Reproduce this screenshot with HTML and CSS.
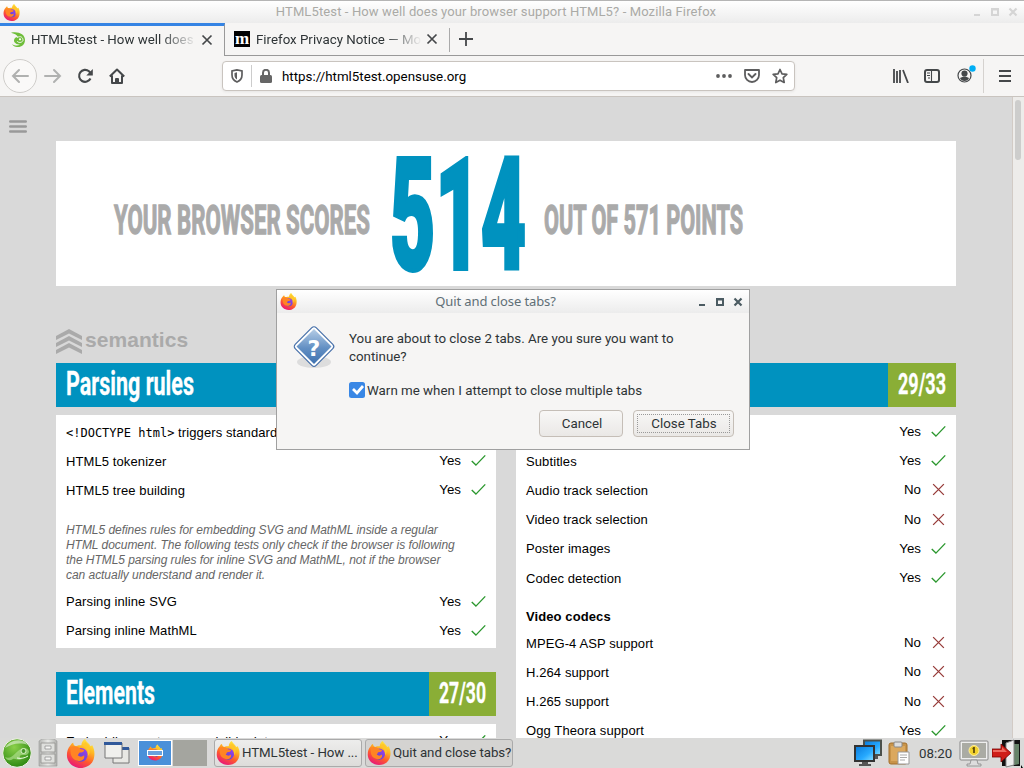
FILE: index.html
```html
<!DOCTYPE html>
<html lang="en">
<head>
<meta charset="utf-8">
<title>HTML5test - How well does your browser support HTML5?</title>
<link rel="stylesheet" href="styles.css">
</head>
<body>
<svg class="defs" width="0" height="0">
  <defs>
    <linearGradient id="flame" x1=".8" y1="0" x2=".3" y2="1"><stop offset="0" stop-color="#fff044"/><stop offset=".35" stop-color="#ffb321"/><stop offset=".65" stop-color="#ff5a2c"/><stop offset="1" stop-color="#e7147c"/></linearGradient>
    <linearGradient id="globe" x1="1" y1="0" x2="0" y2="1"><stop offset="0" stop-color="#a13ff0"/><stop offset="1" stop-color="#4b48c8"/></linearGradient>
    <linearGradient id="sign" x1="0" y1="0" x2="0" y2="1"><stop offset="0" stop-color="#b6cde6"/><stop offset=".55" stop-color="#628fc3"/><stop offset="1" stop-color="#3f72b0"/></linearGradient>
    <radialGradient id="lime" cx=".4" cy=".3" r=".7"><stop offset="0" stop-color="#8ad04a"/><stop offset="1" stop-color="#2f8a13"/></radialGradient>
    <linearGradient id="screen" x1="0" y1="0" x2="1" y2="1"><stop offset="0" stop-color="#0878da"/><stop offset=".6" stop-color="#27aaff"/><stop offset="1" stop-color="#8be0ff"/></linearGradient>
    <linearGradient id="steel" x1="0" y1="0" x2="1" y2="0"><stop offset="0" stop-color="#b4b5b2"/><stop offset=".5" stop-color="#e9eae7"/><stop offset="1" stop-color="#aeafac"/></linearGradient>
    <symbol id="firefox" viewBox="0 0 32 32">
      <path d="M5 7c1-2 2-3 3-3 0 2 1 3 3 4 2-1 4-1 6-1C17 4 19 1 21 0c1 3 5 5 6 8l2-1c2 4 3 8 2 13-1 7-7 12-15 12S1 26 1 18c0-4 1-8 4-11z" fill="url(#flame)"/>
      <circle cx="16.500" cy="17.500" r="7.500" fill="url(#globe)"/>
      <path d="M5 9c4-2 8-1 11 2l4 1c0 2-2 3-5 3-1 1-1 2-2 3 2 2 5 2 7 0 1 5-3 7-7 6-5-1-8-5-8-10z" fill="#ff8424"/>
      <path d="M17 7c5 1 8 6 7 12 3-3 3-7 1-12l-4-4c0 2-2 3-4 4z" fill="#ffc62b"/>
    </symbol>
    <symbol id="yes" viewBox="0 0 14 14"><path d="M.7 7.500 4.600 11.300 13.300 2.200" fill="none" stroke="#2c982f" stroke-width="1.300"/></symbol>
    <symbol id="no" viewBox="0 0 14 14"><path d="M2 2 12 12M12 2 2 12" fill="none" stroke="#963a38" stroke-width="1.200"/></symbol>
  </defs>
</svg>

<header class="titlebar">
  <svg class="ff16"><use href="#firefox"/></svg>
  <span class="wintitle">HTML5test - How well does your browser support HTML5? - Mozilla Firefox</span>
  <svg class="wbtns" width="46" height="12" viewBox="0 0 46 12"><path d="M2 8h6v2H2z" /><path d="M19 2h8v8h-8zM21 4.500v3.500h4V4.500z" fill-rule="evenodd"/><path d="m37.500 2.500 7 7m0-7-7 7" stroke="currentColor" stroke-width="2.200"/></svg>
</header>

<div class="tabs">
  <div class="tab active">
    <svg class="fav" width="16" height="16" viewBox="0 0 16 16"><path d="M1 .8C8-.8 15 2 15 8c0 5-4 7.500-8 7-2 0-4-1-5-3 3 2 6 2 8 .5C7 12.500 4 11 4 8.500 4 6 6 5 8 5 7 3 4 1.500 1 .8z" fill="#6fbe3a"/><path d="M7 5.500c4-2 6 0 6 3-1 2.500-5 2.500-6 .5" fill="none" stroke="#f5f4f2" stroke-width="1"/><circle cx="10" cy="7.300" r="1.100" fill="#fff"/><path d="M0 3.500h5M1 6.500h3M1 9.500h3" stroke="#f6f5f4" stroke-width=".7"/></svg>
    <span class="label l1">HTML5test - How well does</span>
    <svg class="x" width="12" height="12" viewBox="0 0 12 12"><path d="m1.500 1.500 9 9m0-9-9 9"/></svg>
  </div>
  <div class="tab second">
    <span class="moz">m</span>
    <span class="label l2">Firefox Privacy Notice — Mo</span>
    <svg class="x" width="12" height="12" viewBox="0 0 12 12"><path d="m1.500 1.500 9 9m0-9-9 9"/></svg>
  </div>
  <div class="newtab"><svg width="14" height="14" viewBox="0 0 14 14"><path d="M7 0v14M0 7h14" stroke="#45484a" stroke-width="1.800"/></svg></div>
</div>

<nav class="toolbar">
  <span class="back"><svg width="18" height="16" viewBox="0 0 18 16"><path d="M17 8H2m6-6L2 8l6 6"/></svg></span>
  <svg class="fwd" width="18" height="16" viewBox="0 0 18 16"><path d="M1 8h15m-6-6 6 6-6 6"/></svg>
  <svg class="reload" width="16" height="16" viewBox="0 0 16 16"><path d="M13.500 10.500A6 6 0 1 1 12 3.300L14 5.500" fill="none" stroke="#45484a" stroke-width="2.100"/><path d="M15.800 1v6.500H9.300z" fill="#45484a"/></svg>
  <svg class="home" width="16" height="16" viewBox="0 0 16 16"><path d="m.8 8.500 7.200-7 7.200 7M3 7.500V15h10V7.500M7 14.500V11h2v3.500" fill="none" stroke="#45484a" stroke-width="2" stroke-linejoin="round"/></svg>
  <div class="urlbar">
    <svg class="shield" width="12" height="14" viewBox="0 0 12 14"><path d="M6 .9 1 2v4c0 3 1.500 5.500 5 7 3.500-1.500 5-4 5-7V2z" fill="none" stroke="#5d5d5e" stroke-width="1.700"/><path d="M6 3.300 3.500 4v2.500c0 1.500.8 3 2.500 4z" fill="#5d5d5e"/></svg>
    <i class="usep"></i>
    <svg class="lock" width="12" height="14" viewBox="0 0 12 14"><path d="M3 7V3.800a3 3 0 0 1 6 0V7" fill="none" stroke="#666" stroke-width="2"/><rect y="6" width="12" height="8" rx="1.500" fill="#666"/></svg>
    <span class="url">https://html5test.opensuse.org</span>
    <svg class="dots" width="16" height="4" viewBox="0 0 16 4"><circle cx="2" cy="2" r="1.900"/><circle cx="8" cy="2" r="1.900"/><circle cx="14" cy="2" r="1.900"/></svg>
    <svg class="pocket" width="16" height="14" viewBox="0 0 16 14"><path d="M1 1h14v5a7 7 0 0 1-14 0z" fill="none" stroke="#5d5d5e" stroke-width="1.800" stroke-linejoin="round"/><path d="m4.500 5 3.500 3.500L11.500 5" fill="none" stroke="#5d5d5e" stroke-width="1.900" stroke-linecap="round"/></svg>
    <svg class="star" width="16" height="16" viewBox="0 0 16 16"><path d="m8 1.500 2 4.300 4.800.6-3.500 3.300.9 4.800L8 12.200l-4.200 2.300.9-4.800L1.200 6.400 6 5.800z" fill="none" stroke="#5d5d5e" stroke-width="1.700" stroke-linejoin="round"/></svg>
  </div>
  <svg class="lib" width="16" height="14" viewBox="0 0 16 14"><path d="M1 0v14M4 2v12M7 1v13M10 1l5 13" stroke="#45484a" stroke-width="1.800" fill="none"/></svg>
  <svg class="side" width="16" height="14" viewBox="0 0 16 14"><rect x="1" y="1" width="14" height="12" rx="2" fill="none" stroke="#45484a" stroke-width="2"/><path d="M7.500 1v12M3 4h3M3 6.500h3M4 9h2" stroke="#45484a" stroke-width="1.100"/></svg>
  <svg class="acct" width="20" height="20" viewBox="0 0 20 20"><circle cx="8.500" cy="11.500" r="6.500" fill="none" stroke="#45484a" stroke-width="1.200"/><circle cx="8.500" cy="9.500" r="3.100" fill="#45484a"/><path d="M4 14c3-2 6-2 9 0-1 4-8 4-9 0z" fill="#45484a"/><circle cx="16.500" cy="4.500" r="3.200" fill="#00aef5"/></svg>
  <i class="tsep"></i>
  <svg class="menu" width="12" height="12" viewBox="0 0 12 12"><path d="M0 1h12M0 6h12M0 11h12" stroke="#45484a" stroke-width="2"/></svg>
</nav>

<div class="viewport">
  <main class="page">
    <svg class="burger" width="18" height="13" viewBox="0 0 18 13"><path d="M1.200 1.500h15.600M1.200 6.500h15.600M1.200 11.500h15.600" stroke="#999" stroke-width="2.400" stroke-linecap="round"/></svg>
    <section class="score">
      <svg width="900" height="145" viewBox="0 0 900 145">
        <g class="gothic gray"><text x="58" y="93" font-size="41" textLength="256" lengthAdjust="spacingAndGlyphs">YOUR BROWSER SCORES</text>
        <text x="488" y="93" font-size="41" textLength="199" lengthAdjust="spacingAndGlyphs">OUT OF 571 POINTS</text></g>
        <text class="gothic big" x="334" y="128" font-size="155" textLength="136" lengthAdjust="spacingAndGlyphs">514</text>
      </svg>
    </section>
    <h2 class="semantics"><svg width="26" height="26" viewBox="0 0 26 26"><path d="m0 7 13-7 13 7v4L13 4.500 0 11zM0 14l13-7 13 7v4l-13-6.500L0 18zM0 21l13-7 13 7v4l-13-6.500L0 25z" fill="#aaa"/></svg><span>semantics</span></h2>
    <div class="columns">
      <div class="col">
        <div class="head"><svg class="gothic" width="200" height="44"><text x="10" y="32" font-size="33" textLength="128" lengthAdjust="spacingAndGlyphs">Parsing rules</text></svg><svg class="pts gothic" width="67" height="44"></svg></div>
        <div class="panel first">
          <div class="row"><span><code>&lt;!DOCTYPE html&gt;</code> triggers standards mode</span><b></b></div>
          <div class="row"><span>HTML5 tokenizer</span><b>Yes</b><svg><use href="#yes"/></svg></div>
          <div class="row"><span>HTML5 tree building</span><b>Yes</b><svg><use href="#yes"/></svg></div>
          <p>HTML5 defines rules for embedding SVG and MathML inside a regular<br>HTML document. The following tests only check if the browser is following<br>the HTML5 parsing rules for inline SVG and MathML, not if the browser<br>can actually understand and render it.</p>
          <div class="row"><span>Parsing inline SVG</span><b>Yes</b><svg><use href="#yes"/></svg></div>
          <div class="row"><span>Parsing inline MathML</span><b>Yes</b><svg><use href="#yes"/></svg></div>
        </div>
        <div class="head"><svg class="gothic" width="200" height="44"><text x="10" y="32" font-size="33" textLength="89" lengthAdjust="spacingAndGlyphs">Elements</text></svg><svg class="pts gothic" width="67" height="44"><text x="10" y="31" font-size="29" textLength="47" lengthAdjust="spacingAndGlyphs">27/30</text></svg></div>
        <div class="panel"><div class="row"><span>Embedding custom non-visible data</span><b>Yes</b><svg><use href="#yes"/></svg></div></div>
      </div>
      <div class="col">
        <div class="head"><svg class="gothic" width="200" height="44"></svg><svg class="pts gothic" width="68" height="44"><text x="10" y="31" font-size="29" textLength="48" lengthAdjust="spacingAndGlyphs">29/33</text></svg></div>
        <div class="panel">
          <div class="row"><span></span><b>Yes</b><svg><use href="#yes"/></svg></div>
          <div class="row"><span>Subtitles</span><b>Yes</b><svg><use href="#yes"/></svg></div>
          <div class="row"><span>Audio track selection</span><b>No</b><svg><use href="#no"/></svg></div>
          <div class="row"><span>Video track selection</span><b>No</b><svg><use href="#no"/></svg></div>
          <div class="row"><span>Poster images</span><b>Yes</b><svg><use href="#yes"/></svg></div>
          <div class="row"><span>Codec detection</span><b>Yes</b><svg><use href="#yes"/></svg></div>
          <h3>Video codecs</h3>
          <div class="row"><span>MPEG-4 ASP support</span><b>No</b><svg><use href="#no"/></svg></div>
          <div class="row"><span>H.264 support</span><b>No</b><svg><use href="#no"/></svg></div>
          <div class="row"><span>H.265 support</span><b>No</b><svg><use href="#no"/></svg></div>
          <div class="row"><span>Ogg Theora support</span><b>Yes</b><svg><use href="#yes"/></svg></div>
        </div>
      </div>
    </div>
  </main>
  <div class="scroll"><i></i></div>
</div>

<section class="dialog">
  <header><svg class="ff16"><use href="#firefox"/></svg><span class="dtitle">Quit and close tabs?</span>
  <svg class="wbtns" width="46" height="12" viewBox="0 0 46 12"><path d="M2 8h6v2H2z" /><path d="M19 2h8v8h-8zM21 4.500v3.500h4V4.500z" fill-rule="evenodd"/><path d="m37.500 2.500 7 7m0-7-7 7" stroke="currentColor" stroke-width="2.200"/></svg></header>
  <div class="dbody">
    <svg class="sign" width="44" height="46" viewBox="0 0 44 46"><ellipse cx="22" cy="37" rx="17" ry="6" fill="#ddd"/><rect x="7.200" y="6.700" width="29.600" height="29.600" rx="3" transform="rotate(45 22 21.500)" fill="#fff" stroke="#456fa9" stroke-width="1.200"/><path d="m22 4 17.500 17.500L22 39 4.500 21.500z" fill="url(#sign)"/><text x="22" y="30.500" text-anchor="middle">?</text></svg>
    <div class="dtext">
      <div class="msg">You are about to close 2 tabs. Are you sure you want to<br>continue?</div>
      <div class="warn"><svg width="16" height="16" viewBox="0 0 16 16"><rect width="16" height="16" rx="2.500" fill="#3987e5"/><path d="m4 7 4 4L14 4" fill="none" stroke="#fff" stroke-width="2.700"/></svg><span>Warn me when I attempt to close multiple tabs</span></div>
    </div>
  </div>
  <footer><button class="cancel">Cancel</button><button class="closet"><span>Close Tabs</span></button></footer>
</section>

<footer class="taskbar">
  <svg class="suse" width="30" height="30" viewBox="0 0 30 30"><circle cx="15" cy="15" r="14.300" fill="url(#lime)" stroke="#f0f0e8" stroke-width="1"/><path d="M3 19c7 4 12-8 18-9 4 0 6 2 6 4-1 4-5 3-7 3-3 0-3 3 0 4-4 2-7-1-9 0-3 2-6 2-8-2z" fill="#b9e49a" opacity=".6"/><circle cx="21.500" cy="13" r="2.500" fill="#48982a" stroke="#d6efc4"/><path d="M3 10C7 2 20-1 26 7 17 4 10 6 3 10z" fill="#fff" opacity=".5"/><path d="M15 20c4 1 8 0 11-2" fill="none" stroke="#f1ffe6"/></svg>
  <svg class="cab" width="20" height="28" viewBox="0 0 20 28"><path d="M1 2 4 0h12l3 2v25H1z" fill="url(#steel)" stroke="#999" stroke-width=".6"/><path d="M3 4h14v9H3zM3 15h14v9H3z" fill="#dfe0dd" stroke="#8f908d" stroke-width=".8"/><path d="M7 7h6v3H7zM7 18h6v3H7z" fill="#f5f5f3" stroke="#888" stroke-width=".7"/></svg>
  <svg class="ff28"><use href="#firefox"/></svg>
  <svg class="wins" width="26" height="24" viewBox="0 0 26 24"><path d="M9 7h16v15H9z" fill="#e8e8e4" stroke="#777"/><path d="M9 6h16v3H9z" fill="#31599a"/><path d="M1 2h17v15H1z" fill="#f0f0ed" stroke="#777"/><path d="M0 1h18v3H0z" fill="#31599a"/></svg>
  <div class="desk on"><svg><use href="#firefox"/></svg><i></i></div><div class="desk"></div>
  <div class="task t1"><svg><use href="#firefox"/></svg><span>HTML5test - How ...</span></div>
  <div class="task t2"><svg><use href="#firefox"/></svg><span>Quit and close tabs?</span></div>
  <svg class="net" width="30" height="28" viewBox="0 0 30 28"><path d="M11 1.500h17V16H11z" fill="url(#screen)" stroke="#4b504c" stroke-width="2"/><path d="M18 17h7v3h-7z" fill="#555"/><path d="M2 7h19v15H2z" fill="url(#screen)" stroke="#333" stroke-width="2"/><path d="M9 23h6v2h3v2H6v-2h3z" fill="#555"/></svg>
  <svg class="clip" width="22" height="24" viewBox="0 0 22 24"><rect x="1" y="2" width="18" height="21" rx="2" fill="#c8944a" stroke="#a36e2a"/><path d="M3 5h14v15H3z" fill="#dba85e"/><rect x="6" y="1" width="8" height="5" rx="1" fill="#ddd" stroke="#888"/><path d="M10 11h11v12H10z" fill="#fff" stroke="#999"/><path d="M12 14h7M12 16.500h7M12 19h5" stroke="#aaa"/></svg>
  <span class="clock">08:20</span>
  <svg class="mon" width="30" height="27" viewBox="0 0 30 27"><rect x="1" y="1" width="28" height="19" rx="1" fill="#eee" stroke="#888"/><path d="M3 3h24v15H3z" fill="#aaaba4"/><path d="M12 20h6l1 4h3v2H8v-2h3z" fill="#ddd" stroke="#888" stroke-width=".8"/><circle cx="15" cy="10.500" r="5" fill="#f2d22e" stroke="#fff0a0"/><path d="M15 7v6M13.500 8.500H15" stroke="#57460a" stroke-width="1.700" fill="none"/></svg>
  <svg class="exit" width="31" height="29" viewBox="0 0 31 29"><path d="M10 1h18v26H10z" fill="#111"/><path d="M18 5h9v20l-9 2z" fill="#668369"/><path d="m14 4 8-3v25l-8 2z" fill="#eee" stroke="#888"/><path d="M0 10h9V5l10 9-10 9v-5H0z" fill="#cf1e18" stroke="#700" stroke-width=".8"/><path d="M1 11h9V8l5 5H1z" fill="#ed6a5f"/><path d="m29 26 2 3h-2z" fill="#000"/></svg>
</footer>
</body>
</html>
```

FILE: styles.css
```css
* { box-sizing: border-box; }
body { margin: 0; width: 1024px; height: 768px; overflow: hidden; display: flex; flex-direction: column; position: relative; font-family: Roboto, sans-serif; background: #f6f5f4; color: #2e3436; }
svg { display: block; flex: none; }
.defs { position: absolute; }
.ff16 { width: 17px; height: 17px; }
.titlebar { height: 23px; flex: none; border-top: 1px solid #b5b5b5; background: linear-gradient(#fff, #ececec); display: flex; align-items: center; padding: 0 6px 0 3px; color: #d5d5d5; }
.wintitle { flex: 1; text-align: center; color: #aaaaa6; font-size: 13px; padding-bottom: 1px; letter-spacing: .12px; white-space: nowrap; }
.wbtns { fill: currentColor; }
.tabs { height: 33px; flex: none; display: flex; align-items: stretch; font-size: 13.300px; }
.tab { display: flex; align-items: center; white-space: nowrap; }
.tab.active { width: 225px; border-top: 3px solid #3584e4; border-right: 1px solid #999; padding-left: 10px; padding-bottom: 3px; }
.tab.second { width: 225px; border-bottom: 1px solid #999; padding-left: 9px; }
.label { overflow: hidden; margin-left: 5px; width: 166px; -webkit-mask-image: linear-gradient(90deg, #000 78%, transparent); mask-image: linear-gradient(90deg, #000 78%, transparent); }
.l2 { margin-left: 6px; }
.x { margin-left: 4px; fill: none; stroke: #45484a; stroke-width: 1.700; }
.moz { background: #000; color: #fff; width: 16px; height: 16px; font: bold 17px/15px "Liberation Serif", serif; text-align: center; }
.newtab { flex: 1; border-bottom: 1px solid #999; padding: 9px 0 0 9px; position: relative; }
.newtab::before { content: ""; position: absolute; left: -1px; top: 5px; height: 24px; width: 1px; background: #aaa; }
.toolbar { height: 41px; flex: none; border-bottom: 1px solid #c9c4bf; display: flex; align-items: center; padding-left: 3px; }
.back { width: 34px; height: 34px; border: 1px solid #cfcdca; border-radius: 50%; background: #faf9f8; display: flex; align-items: center; justify-content: center; }
.back path, .fwd path { fill: none; stroke: #b0b1b0; stroke-width: 2; stroke-linecap: round; }
.fwd { margin-left: 7px; }
.reload { margin-left: 15px; }
.home { margin-left: 16px; }
.urlbar { width: 573px; height: 30px; margin-left: 97px; background: #fff; border: 1px solid #c9c4bf; border-radius: 4px; display: flex; align-items: center; padding-left: 8px; box-shadow: 0 1px 3px #0001; }
.usep { height: 22px; width: 1px; background: #ccc; margin: 0 8px; }
.url { font-size: 13.330px; color: #000; margin-left: 10px; width: 430px; }
.dots { fill: #5d5d5e; margin-left: 4px; }
.pocket { margin-left: 12px; }
.star { margin-left: 12px; }
.lib { margin-left: 98px; }
.side { margin-left: 15px; }
.acct { margin-left: 16px; margin-bottom: 5px; }
.tsep { width: 1px; height: 34px; background: #d5d2cf; margin-left: 7px; }
.menu { margin-left: 15px; }
.viewport { height: 641px; flex: none; display: flex; overflow: hidden; background: #d9d9d9; }
.page { width: 1012px; flex: none; position: relative; padding: 44px 56px 0; font-family: "Liberation Sans", Arial, sans-serif; color: #000; }
.scroll { width: 12px; border-left: 1px solid #d2cbc5; background: #edecea; padding: 3px 0 0 2px; }
.scroll i { display: block; width: 6px; height: 60px; border-radius: 3px; background: #cdcdcc; }
.burger { position: absolute; left: 9px; top: 23px; }
.score { width: 900px; height: 145px; background: #fff; }
.gothic { font-family: Roboto, sans-serif; font-weight: 700; fill: #fff; stroke: #fff; stroke-width: .3px; }
.gray { fill: #aaa; stroke: #aaa; stroke-width: 1.300px; }
.big { font-weight: 900; fill: #0092bf; stroke: #0092bf; stroke-width: 4px; }
.semantics { margin: 0; height: 77px; padding-top: 43px; display: flex; gap: 3px; color: #aaa; font-size: 21px; line-height: 22px; letter-spacing: .05px; }
.columns { display: flex; gap: 20px; align-items: flex-start; }
.col { width: 440px; flex: none; }
.head { height: 44px; background: #0092bf; display: flex; justify-content: space-between; margin-bottom: 8px; }
.pts { background: #8aae36; }
.panel { background: #fff; padding: 2px 10px 0; font-size: 13px; }
.first { height: 233px; margin-bottom: 24px; }
.row { height: 29.200px; display: flex; align-items: center; }
.row span { flex: 1; white-space: nowrap; padding-top: 1px; letter-spacing: .1px; }
.row b { font-weight: 400; margin-right: 10px; font-size: 13.300px; }
.row svg { width: 15px; height: 15px; }
.row code { font: 12px "DejaVu Sans Mono", monospace; letter-spacing: 0; }
.panel p { margin: 18px 0 4px; height: 60px; color: #666; font-size: 12px; line-height: 15px; font-style: italic; white-space: nowrap; letter-spacing: -.045px; }
.panel h3 { font-size: 13px; line-height: 18px; margin: 16px 0 2px; letter-spacing: .1px; }
.dialog { position: absolute; left: 276px; top: 289px; width: 474px; height: 161px; border: 1px solid #a0a0a0; background: #f6f5f4; font-size: 13.330px; }
.dialog header { height: 23px; background: linear-gradient(#fff, #ececec); display: flex; align-items: center; padding: 0 6px 0 3px; color: #4b5b62; }
.dtitle { flex: 1; text-align: center; font: 13px "Noto Sans", sans-serif; color: #5f6f76; padding: 0 3px 2px 0; letter-spacing: -.1px; }
.dbody { display: flex; padding: 12px 0 0 15px; height: 95px; }
.dtext { margin-left: 13px; padding-top: 5px; }
.msg { line-height: 18px; white-space: nowrap; }
.warn { display: flex; gap: 2px; align-items: center; margin-top: 16px; height: 16px; white-space: nowrap; }
.sign text { font: bold 22px "DejaVu Sans", sans-serif; fill: #fff; }
.dialog footer { display: flex; gap: 10px; justify-content: flex-end; padding: 2px 15px 0 0; }
.dialog button { font: 13.330px Roboto, sans-serif; color: #2e3436; height: 27px; border: 1px solid #c5beb7; border-radius: 4px; background: linear-gradient(#f8f7f6, #eae8e6); padding: 3px; }
.dialog .cancel { width: 84px; padding-left: 5px; }
.closet { width: 101px; }
.closet span { display: block; border: 1px dotted #999; height: 19px; line-height: 17px; padding-left: 1px; }
.taskbar { height: 30px; flex: none; background: #dadad9; display: flex; align-items: center; padding-left: 2px; font-size: 13.300px; overflow: hidden; white-space: nowrap; }
.cab { margin-left: 6px; }
.ff28 { width: 29px; height: 29px; margin-left: 8px; }
.wins { margin-left: 9px; }
.desk { width: 34px; height: 26px; background: #a4a59f; position: relative; margin-left: 1px; }
.desk.on { background: #4a90d9; border: 1px solid #fff; margin-left: 8px; }
.desk svg { width: 16px; height: 17px; margin: 3px 0 0 8px; }
.desk i { position: absolute; left: 8px; top: 9px; width: 16px; height: 6px; border: 1px solid #fff; background: #68a1df; }
.task { width: 148px; height: 28px; border: 1px solid #aaa; border-radius: 3px; display: flex; align-items: center; padding-left: 1px; gap: 2px; background: linear-gradient(#ededec, #dddcda); margin-left: 7px; padding-bottom: 1px; letter-spacing: -.08px; }
.task svg { width: 24px; height: 24px; }
.task.t2 { margin-left: 3px; background: #d4d3d1; }
.net { margin-left: 340px; }
.clip { margin-left: 5px; }
.clock { margin-left: 9px; width: 35px; }
.mon { margin-left: 5px; }
.exit { margin-left: 3px; }
```
